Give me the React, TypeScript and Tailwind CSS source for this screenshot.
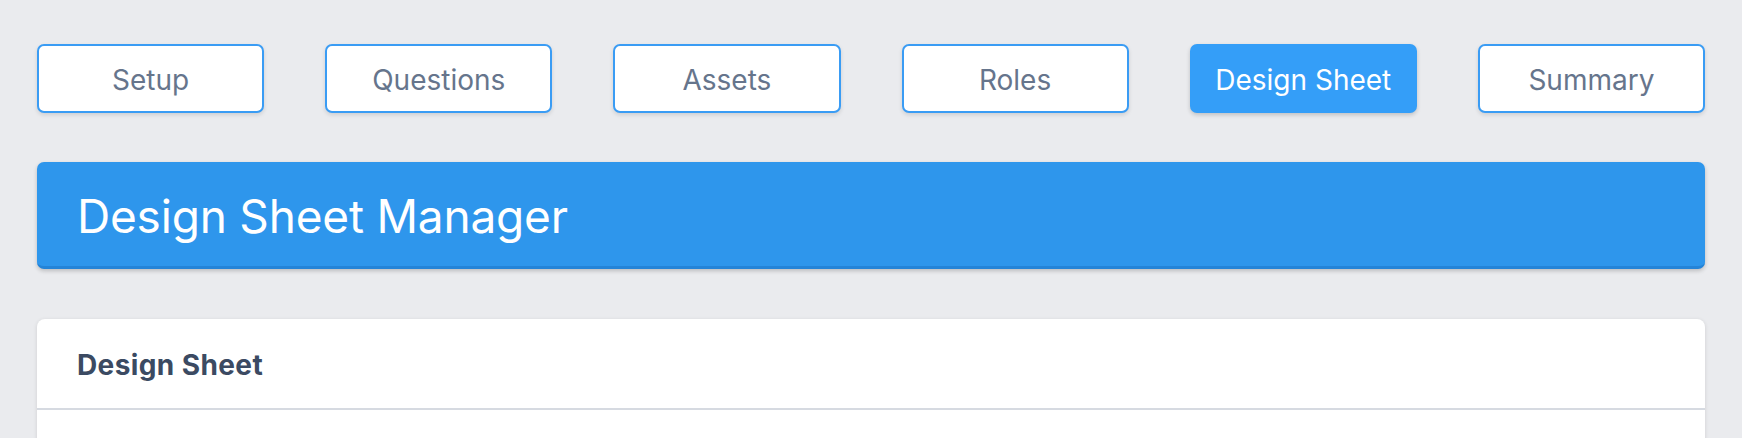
const tabs = ['Setup', 'Questions', 'Assets', 'Roles', 'Design Sheet', 'Summary']

export default function App() {
  const active = 'Design Sheet'

  return (
    <div className="min-h-screen bg-[#eaebee] px-[37px] pt-[44px] font-['Inter',sans-serif]">
      {/* Steps */}
      <div className="grid grid-cols-6 gap-[61px]">
        {tabs.map((t) =>
          t === active ? (
            <button
              key={t}
              className="h-[69px] rounded-[7px] bg-[#349ef8] pt-[2px] text-[28px] text-white shadow-[0_2px_4px_rgba(0,0,0,0.18)]"
            >
              {t}
            </button>
          ) : (
            <button
              key={t}
              className="h-[69px] rounded-[7px] border-2 border-[#3a9cf4] bg-white pt-[2px] text-[28px] text-[#66758c] shadow-[0_2px_4px_rgba(0,0,0,0.12)]"
            >
              {t}
            </button>
          )
        )}
      </div>

      {/* Banner */}
      <div className="mt-[49px] flex h-[107px] items-center rounded-[7px] border-b-[3px] border-[#2484d8] bg-[#2e96ec] pl-[40px] pt-[4px] shadow-[0_2px_4px_rgba(0,0,0,0.2)]">
        <h1 className="text-[46px] font-normal tracking-[-0.2px] text-white">Design Sheet Manager</h1>
      </div>

      {/* Card */}
      <div className="mt-[50px] rounded-t-[8px] bg-white shadow-[0_1px_4px_rgba(0,0,0,0.12)]">
        <div className="flex h-[91px] items-center border-b-2 border-[#d6dae1] px-[40px] pt-[2px]">
          <h2 className="text-[28px] font-bold tracking-[0.4px] text-[#3b4a62]">Design Sheet</h2>
        </div>
        <div className="h-[60px]"></div>
      </div>
    </div>
  )
}
